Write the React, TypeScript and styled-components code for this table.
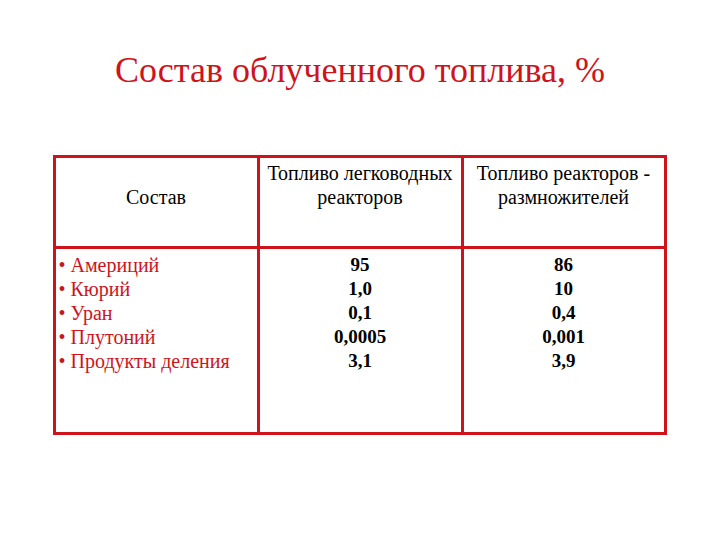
import React from 'react';
import styled, { createGlobalStyle } from 'styled-components';

const GlobalStyle = createGlobalStyle`
  html, body {
    margin: 0;
    padding: 0;
    background: #ffffff;
  }
  body {
    font-family: "Liberation Serif", "DejaVu Serif", serif;
  }
`;

const red = '#d0121b';

const Slide = styled.div`
  width: 720px;
  height: 540px;
  background: #fff;
  display: flex;
  flex-direction: column;
  align-items: center;
`;

const Title = styled.h1`
  margin: 48px 0 0;
  font-family: "Liberation Serif", "DejaVu Serif", serif;
  font-size: 36px;
  font-weight: normal;
  line-height: 44px;
  color: ${red};
`;

const Table = styled.div`
  margin: 63px 0 0 -1px;
  width: 614px;
  box-sizing: border-box;
  display: grid;
  grid-template-columns: 204px 204px 200px;
  grid-template-rows: 91px 183px;
  border: 3px solid ${red};
`;

const Cell = styled.div<{ $head?: boolean; $last?: boolean }>`
  border-right: ${({ $last }) => ($last ? 'none' : `3px solid ${red}`)};
  border-bottom: ${({ $head }) => ($head ? `3px solid ${red}` : 'none')};
  font-family: "Liberation Serif", "DejaVu Serif", serif;
  font-size: 20px;
  line-height: 24px;
  color: #000;
  text-align: center;
  padding-top: ${({ $head }) => ($head ? '3px' : '4px')};
`;

const HeadLabel = styled.div<{ $offset?: boolean }>`
  padding-top: ${({ $offset }) => ($offset ? '24px' : '0')};
`;

const ItemList = styled.ul`
  list-style: none;
  margin: 0;
  padding: 0 0 0 3px;
  text-align: left;
  color: ${red};
`;

const Numbers = styled.div`
  font-size: 19px;
  font-weight: bold;
`;

const items = ['Америций', 'Кюрий', 'Уран', 'Плутоний', 'Продукты деления'];
const lwr = ['95', '1,0', '0,1', '0,0005', '3,1'];
const breeder = ['86', '10', '0,4', '0,001', '3,9'];

export default function App() {
  return (
    <Slide>
      <GlobalStyle />
      <Title>Состав облученного топлива, %</Title>
      <Table>
        <Cell $head>
          <HeadLabel $offset>Состав</HeadLabel>
        </Cell>
        <Cell $head>
          <HeadLabel>Топливо легководных<br />реакторов</HeadLabel>
        </Cell>
        <Cell $head $last>
          <HeadLabel>Топливо реакторов -<br />размножителей</HeadLabel>
        </Cell>
        <Cell>
          <ItemList>
            {items.map((i) => (
              <li key={i}>• {i}</li>
            ))}
          </ItemList>
        </Cell>
        <Cell>
          <Numbers>
            {lwr.map((n, k) => (
              <div key={k}>{n}</div>
            ))}
          </Numbers>
        </Cell>
        <Cell $last>
          <Numbers>
            {breeder.map((n, k) => (
              <div key={k}>{n}</div>
            ))}
          </Numbers>
        </Cell>
      </Table>
    </Slide>
  );
}
